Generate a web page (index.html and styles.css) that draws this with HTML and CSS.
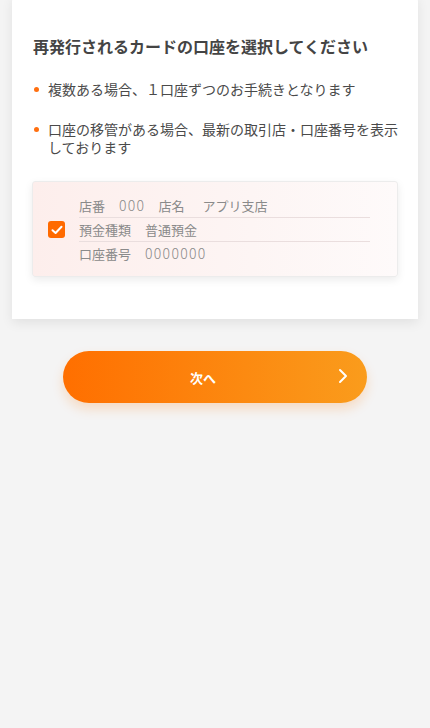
FILE: index.html
```html
<!DOCTYPE html>
<html lang="ja">
<head>
    <meta charset="UTF-8">
    <meta name="viewport" content="width=device-width, initial-scale=1.0">
    <title>口座選択</title>
    <link rel="stylesheet" href="styles.css">
</head>
<body>

<div class="page">
    <div class="card">
        <h2 class="card-title">再発行されるカードの口座を選択してください</h2>
        <ul class="notes">
            <li>複数ある場合、１口座ずつのお手続きとなります</li>
            <li>口座の移管がある場合、最新の取引店・口座番号を表示しております</li>
        </ul>

        <label class="account">
            <span class="check">
                <svg width="12" height="10" viewBox="0 0 12 10">
                    <path d="M1.5 5.2 L4.6 8 L10.5 1.8" fill="none" stroke="#fff" stroke-width="2" stroke-linecap="round" stroke-linejoin="round"/>
                </svg>
            </span>
            <span class="account-info">
                <span class="row">店番<span class="val num">000</span><span class="gap">店名</span><span class="val">アプリ支店</span></span>
                <span class="row">預金種類<span class="val">普通預金</span></span>
                <span class="row last">口座番号<span class="val num">0000000</span></span>
            </span>
        </label>
    </div>

    <div class="actions">
        <button type="button" class="next-btn">
            次へ
            <svg class="chev" width="10" height="16" viewBox="0 0 10 16">
                <path d="M2 2 L8 8 L2 14" fill="none" stroke="#fff" stroke-width="2" stroke-linecap="round" stroke-linejoin="round"/>
            </svg>
        </button>
    </div>
</div>

</body>
</html>
```

FILE: styles.css
```css
body {
    margin: 0;
    padding: 0;
    background: #f4f4f4;
    font-family: "Noto Sans CJK JP", "Noto Sans", sans-serif;
    color: #444;
}

.page {
    width: 430px;
    height: 728px;
    overflow: hidden;
}

.card {
    margin: -8px 12px 0;
    background: #fff;
    border-radius: 10px 10px 0 0;
    box-shadow: 0 4px 12px rgba(0, 0, 0, 0.08);
    padding: 43px 19px 42px 20px;
}

.card-title {
    margin: 0 0 23px 1px;
    font-size: 16px;
    font-weight: 700;
    line-height: 22px;
    color: #444;
}

.notes {
    list-style: none;
    margin: 0;
    padding: 0;
}

.notes li {
    position: relative;
    padding-left: 16px;
    font-size: 14px;
    line-height: 18px;
    margin-bottom: 22px;
    color: #4a4a4a;
}

.notes li:last-child {
    margin-bottom: 0;
}

.notes li::before {
    content: "";
    position: absolute;
    left: 2px;
    top: 7px;
    width: 5px;
    height: 5px;
    border-radius: 50%;
    background: #ff6f10;
}

.account {
    display: flex;
    align-items: center;
    margin: 25px 1px 0 0;
    padding: 12px 27px 11px 15px;
    border: 1px solid #ececec;
    border-radius: 3px;
    background: linear-gradient(to right, #fdeeec, #fdf5f4 60%, #fefafa);
    box-shadow: 0 3px 8px rgba(0, 0, 0, 0.08);
}

.check {
    flex: none;
    width: 17px;
    height: 17px;
    border-radius: 3px;
    background: #ff6a00;
    display: flex;
    align-items: center;
    justify-content: center;
    margin-right: 14px;
}

.account-info {
    flex: 1;
    display: flex;
    flex-direction: column;
}

.row {
    font-size: 13px;
    line-height: 23px;
    color: #8a8a8a;
    border-bottom: 1px solid #eadede;
}

.row.last {
    border-bottom: none;
}

.val {
    margin-left: 14px;
}

.num {
    font-size: 14px;
    font-weight: 300;
    letter-spacing: 1.3px;
}

.gap {
    margin-left: 13px;
}

.gap + .val {
    margin-left: 18px;
}

.actions {
    display: flex;
    justify-content: center;
    padding-top: 32px;
}

.next-btn {
    position: relative;
    width: 304px;
    height: 52px;
    border: none;
    border-radius: 26px;
    background: linear-gradient(to right, #ff6f00, #fa9c1c);
    box-shadow: 0 6px 12px rgba(255, 120, 0, 0.2);
    color: #fff;
    font-family: inherit;
    font-size: 13px;
    font-weight: 700;
    padding: 0 24px 0 0;
    cursor: pointer;
}

.chev {
    position: absolute;
    right: 19px;
    top: 17px;
}
```
